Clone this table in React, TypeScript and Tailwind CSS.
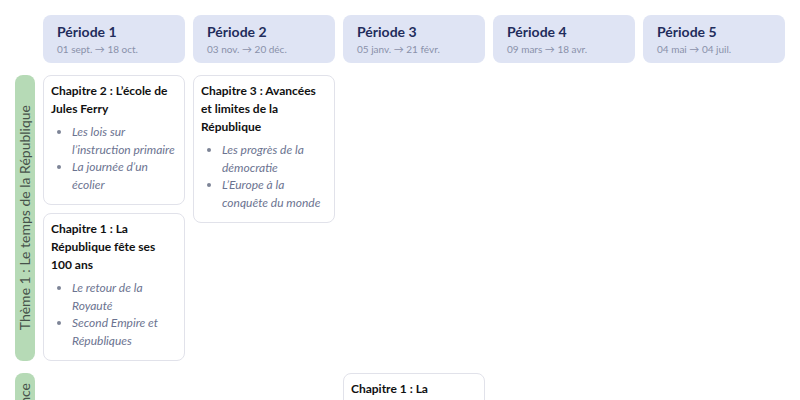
import React from "react";

type Chapitre = { titre: string; items: string[] };

const periodes = [
  { nom: "Période 1", dates: "01 sept. → 18 oct." },
  { nom: "Période 2", dates: "03 nov. → 20 déc." },
  { nom: "Période 3", dates: "05 janv. → 21 févr." },
  { nom: "Période 4", dates: "09 mars → 18 avr." },
  { nom: "Période 5", dates: "04 mai → 04 juil." },
];

const themes: { titre: string; colonnes: Chapitre[][] }[] = [
  {
    titre: "Thème 1 : Le temps de la République",
    colonnes: [
      [
        {
          titre: "Chapitre 2 : L’école de Jules Ferry",
          items: ["Les lois sur l’instruction primaire", "La journée d’un écolier"],
        },
        {
          titre: "Chapitre 1 : La République fête ses 100 ans",
          items: ["Le retour de la Royauté", "Second Empire et Républiques"],
        },
      ],
      [
        {
          titre: "Chapitre 3 : Avancées et limites de la République",
          items: ["Les progrès de la démocratie", "L’Europe à la conquête du monde"],
        },
      ],
      [],
      [],
      [],
    ],
  },
  {
    titre: "Thème 2 : L’âge industriel en France",
    colonnes: [
      [],
      [],
      [
        {
          titre: "Chapitre 1 : La révolution industrielle",
          items: ["Énergies et machines", "Le travail à la mine et à l’usine"],
        },
      ],
      [],
      [],
    ],
  },
];

function Carte({ c }: { c: Chapitre }) {
  return (
    <div className="rounded-lg border border-[#e1e2ea] bg-white px-[7px] pt-[6px] pb-[11px]">
      <h3 className="text-[12px] font-bold leading-[18px] text-[#111]">{c.titre}</h3>
      <ul className="mt-[5px] list-disc pl-[21px] marker:text-[#7d8496]">
        {c.items.map((it) => (
          <li key={it} className="text-[12px] italic leading-[17.5px] text-[#6b7390]">
            {it}
          </li>
        ))}
      </ul>
    </div>
  );
}

export default function App() {
  return (
    <div
      className="min-h-screen bg-white p-[15px]"
      style={{ fontFamily: "Lato, 'Noto Sans', sans-serif" }}
    >
      <div className="grid grid-cols-[20px_repeat(5,142px)] gap-x-2 gap-y-3">
        <div />
        {periodes.map((p) => (
          <div key={p.nom} className="h-12 rounded-lg bg-[#dfe4f4] px-[14px] pt-2">
            <div className="text-[14px] font-bold leading-[18px] text-[#1f2d5c]">{p.nom}</div>
            <div className="mt-[1px] text-[10px] leading-[14px] text-[#8a91aa]">{p.dates}</div>
          </div>
        ))}

        {themes.map((t) => (
          <React.Fragment key={t.titre}>
            <div className="flex items-center justify-center rounded-lg bg-[#b6dab6] py-2.5">
              <span className="rotate-180 whitespace-nowrap text-[14px] leading-[20px] text-[#46524a] [writing-mode:vertical-rl]">
                {t.titre}
              </span>
            </div>
            {t.colonnes.map((col, i) => (
              <div key={i} className="flex flex-col gap-2 self-start">
                {col.map((c) => (
                  <Carte key={c.titre} c={c} />
                ))}
              </div>
            ))}
          </React.Fragment>
        ))}
      </div>
    </div>
  );
}
